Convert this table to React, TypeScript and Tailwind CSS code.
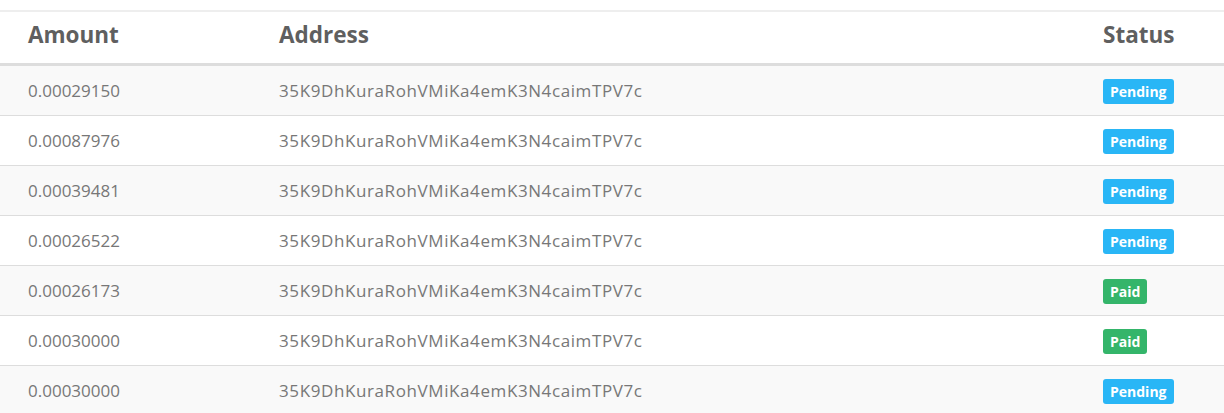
import React from "react";

const rows: { amount: string; status: "Pending" | "Paid" }[] = [
  { amount: "0.00029150", status: "Pending" },
  { amount: "0.00087976", status: "Pending" },
  { amount: "0.00039481", status: "Pending" },
  { amount: "0.00026522", status: "Pending" },
  { amount: "0.00026173", status: "Paid" },
  { amount: "0.00030000", status: "Paid" },
  { amount: "0.00030000", status: "Pending" },
];

const addr = "35K9DhKuraRohVMiKa4emK3N4caimTPV7c";

export default function App() {
  return (
    <div className="w-[1224px] h-[413px] overflow-hidden bg-white pt-[10px]" style={{ fontFamily: '"Open Sans", sans-serif' }}>
      <div className="border-t-2 border-[#eeeeee]">
        <div className="grid grid-cols-[251px_824px_1fr] h-[54px] items-center pl-[28px] pb-[6px] border-b-[3px] border-[#dddddd] text-[#5f5f5f] font-bold text-[22.5px]">
          <div>Amount</div>
          <div>Address</div>
          <div>Status</div>
        </div>
        {rows.map((r, i) => (
          <div
            key={i}
            className={`grid grid-cols-[251px_824px_1fr] h-[50px] items-center pl-[28px] border-b border-[#dddddd] text-[#777777] text-[17px] ${i % 2 === 0 ? "bg-[#f9f9f9]" : "bg-white"}`}
          >
            <div>{r.amount}</div>
            <div className="tracking-[0.6px]">{addr}</div>
            <div>
              {r.status === "Pending" ? (
                <span className="inline-flex items-center h-[25px] px-[7px] rounded-[3px] bg-[#29b6f6] text-white font-bold text-[14px]">Pending</span>
              ) : (
                <span className="inline-flex items-center h-[25px] px-[7px] rounded-[3px] bg-[#34b56a] text-white font-bold text-[14px]">Paid</span>
              )}
            </div>
          </div>
        ))}
      </div>
    </div>
  );
}
